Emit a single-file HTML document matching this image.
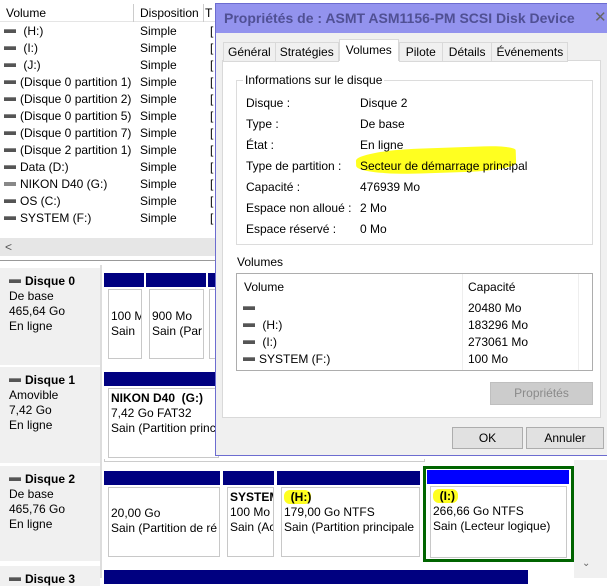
<!DOCTYPE html>
<html><head><meta charset="utf-8"><style>
*{margin:0;padding:0;box-sizing:border-box}
body{width:607px;height:578px;overflow:hidden;background:#fff;font-family:"Liberation Sans",sans-serif;font-size:12px;color:#000;position:relative}
.a{position:absolute;white-space:nowrap}
.ic{display:inline-block;width:12px;height:4px;background:#555;border-top:1px solid #888;vertical-align:middle;margin-right:4px;position:relative;top:-1px}
.bar{position:absolute;height:14px;background:#000080}
.box{position:absolute;background:#fff;border:1px solid #c8c8c8;overflow:hidden;padding:0 2px;font-size:12px;line-height:15px;white-space:nowrap}
.dl{position:absolute;left:0;width:100px;background:#f0f0f0;padding:6px 0 0 9px;line-height:15px;font-size:12px}
.btn{position:absolute;background:#e1e1e1;border:1px solid #adadad;text-align:center;line-height:20px;font-size:12px}
.hl{background:#ffff20;border-radius:6px}
</style></head><body>
<div class="a" style="left:0;top:3px;width:215px;height:19px;background:#fff;border-bottom:1px solid #e5e5e5"></div>
<div class="a" style="left:0;top:4px;width:134px;height:18px;border-right:1px solid #ccc;padding-left:6px;line-height:18px">Volume</div>
<div class="a" style="left:134px;top:4px;width:70px;height:18px;border-right:1px solid #ccc;padding-left:6px;line-height:18px">Disposition</div>
<div class="a" style="left:205px;top:4px;line-height:18px">T</div>
<div class="a" style="left:4px;top:23px;line-height:17px">
<div><span class="ic"></span> (H:)</div><div><span class="ic"></span> (I:)</div><div><span class="ic"></span> (J:)</div>
<div><span class="ic"></span>(Disque 0 partition 1)</div><div><span class="ic"></span>(Disque 0 partition 2)</div><div><span class="ic"></span>(Disque 0 partition 5)</div><div><span class="ic"></span>(Disque 0 partition 7)</div><div><span class="ic"></span>(Disque 2 partition 1)</div><div><span class="ic"></span>Data (D:)</div><div><span class="ic" style="background:#888"></span>NIKON D40 (G:)</div><div><span class="ic"></span>OS (C:)</div><div><span class="ic"></span>SYSTEM (F:)</div></div>
<div class="a" style="left:140px;top:23px;line-height:17px">Simple<br>Simple<br>Simple<br>Simple<br>Simple<br>Simple<br>Simple<br>Simple<br>Simple<br>Simple<br>Simple<br>Simple</div>
<div class="a" style="left:210px;top:23px;line-height:17px">[<br>[<br>[<br>[<br>[<br>[<br>[<br>[<br>[<br>[<br>[<br>[</div>
<div class="a" style="left:0;top:238px;width:215px;height:18px;background:#e6e6e6"></div>
<div class="a" style="left:5px;top:238px;line-height:18px;color:#555">&lt;</div>
<div class="a" style="left:0;top:260px;width:607px;height:318px;background:#fff;border-top:1px solid #999"></div>
<div class="dl" style="top:268px;height:97px"><b><span class="ic"></span>Disque 0</b><br>De base<br>465,64 Go<br>En ligne</div>
<div class="dl" style="top:367px;height:96px"><b><span class="ic"></span>Disque 1</b><br>Amovible<br>7,42 Go<br>En ligne</div>
<div class="dl" style="top:466px;height:95px"><b><span class="ic"></span>Disque 2</b><br>De base<br>465,76 Go<br>En ligne</div>
<div class="dl" style="top:566px;height:20px"><b><span class="ic"></span>Disque 3</b></div>
<div class="a" style="left:100px;top:265px;width:2px;height:313px;background:#ddd"></div>
<div class="bar" style="left:104px;top:273px;width:40px"></div><div class="bar" style="left:146px;top:273px;width:60px"></div><div class="bar" style="left:208px;top:273px;width:10px"></div>
<div class="box" style="left:108px;top:289px;width:34px;height:70px;padding-top:19px">100 M<br>Sain</div>
<div class="box" style="left:149px;top:289px;width:55px;height:70px;padding-top:19px">900 Mo<br>Sain (Par</div>
<div class="box" style="left:209px;top:289px;width:10px;height:70px"></div>
<div class="bar" style="left:104px;top:372px;width:115px"></div>
<div class="box" style="left:108px;top:388px;width:111px;height:70px;padding-top:2px"><b>NIKON D40&nbsp; (G:)</b><br>7,42 Go FAT32<br>Sain (Partition princ</div>
<div class="a" style="left:104px;top:459px;width:321px;height:3px;border:1px solid #ccc;border-top:0"></div>
<div class="bar" style="left:104px;top:471px;width:116px"></div>
<div class="bar" style="left:223px;top:471px;width:51px"></div>
<div class="bar" style="left:277px;top:471px;width:143px"></div>
<div class="box" style="left:108px;top:487px;width:112px;height:70px;padding-top:18px">20,00 Go<br>Sain (Partition de ré</div>
<div class="box" style="left:227px;top:487px;width:47px;height:70px;padding-top:2px"><b>SYSTEM</b><br>100 Mo<br>Sain (Ac</div>
<div class="box" style="left:281px;top:487px;width:139px;height:70px;padding-top:2px"><b><span class="hl">&nbsp; (H:)</span></b><br>179,00 Go NTFS<br>Sain (Partition principale</div>
<div class="a" style="left:423px;top:466px;width:151px;height:96px;border:3px solid #006400"></div>
<div class="bar" style="left:427px;top:470px;width:142px;background:#0000ff"></div>
<div class="box" style="left:430px;top:486px;width:137px;height:72px;padding-top:2px"><b><span class="hl">&nbsp; (I:)&nbsp;</span></b><br>266,66 Go NTFS<br>Sain (Lecteur logique)</div>
<div class="bar" style="left:104px;top:570px;width:424px"></div>
<div class="a" style="left:574px;top:460px;width:33px;height:118px;background:#f0f0f0"></div>
<div class="a" style="left:582px;top:558px;color:#666;font-size:10px">&#8964;</div>
<div class="a" style="left:215px;top:3px;width:400px;height:453px;background:#f0f0f0;border:1px solid #6c6cd0"></div>
<div class="a" style="left:216px;top:4px;width:391px;height:29px;background:#9393ee"></div>
<div class="a" style="left:224px;top:10px;font-size:14px;font-weight:bold;color:#505094">Propriétés de : ASMT ASM1156-PM SCSI Disk Device</div>
<div class="a" style="left:594px;top:8px;font-size:15px;color:#666">✕</div>
<div class="a" style="left:222px;top:60px;width:379px;height:358px;background:#fff;border:1px solid #d9d9d9"></div>
<div class="a" style="left:223px;top:42px;line-height:18px;font-size:12px;display:flex">
<span style="border:1px solid #d9d9d9;padding:0 4px;background:#f0f0f0">Général</span><span style="border:1px solid #d9d9d9;border-left:0;padding:0 4px;background:#f0f0f0">Stratégies</span><span style="border:1px solid #d9d9d9;border-bottom:0;padding:0 6px;background:#fff;margin-top:-3px;height:22px;line-height:20px">Volumes</span><span style="border:1px solid #d9d9d9;padding:0 6px;background:#f0f0f0">Pilote</span><span style="border:1px solid #d9d9d9;border-left:0;padding:0 6px;background:#f0f0f0">Détails</span><span style="border:1px solid #d9d9d9;border-left:0;padding:0 4px;background:#f0f0f0">Événements</span></div>
<div class="a" style="left:236px;top:80px;width:357px;height:165px;border:1px solid #dcdcdc"></div>
<div class="a" style="left:243px;top:73px;background:#fff;padding:0 2px">Informations sur le disque</div>
<div class="a" style="left:246px;top:93px;line-height:21px">Disque :<br>Type :<br>État :<br>Type de partition :<br>Capacité :<br>Espace non alloué :<br>Espace réservé :</div>
<div class="a" style="left:356px;top:148px;width:160px;height:25px;background:#ffff20;border-radius:40% 20% 30% 40%;transform:rotate(-2deg)"></div>
<div class="a" style="left:360px;top:93px;line-height:21px">Disque 2<br>De base<br>En ligne<br>Secteur de démarrage principal<br>476939 Mo<br>2 Mo<br>0 Mo</div>
<div class="a" style="left:237px;top:255px">Volumes</div>
<div class="a" style="left:236px;top:273px;width:357px;height:98px;border:1px solid #adadad"></div>
<div class="a" style="left:462px;top:274px;width:1px;height:96px;background:#eee"></div>
<div class="a" style="left:578px;top:274px;width:1px;height:96px;background:#eee"></div>
<div class="a" style="left:244px;top:280px">Volume</div>
<div class="a" style="left:468px;top:280px">Capacité</div>
<div class="a" style="left:243px;top:300px;line-height:17px"><span class="ic"></span><br><span class="ic"></span> (H:)<br><span class="ic"></span> (I:)<br><span class="ic"></span>SYSTEM (F:)</div>
<div class="a" style="left:468px;top:300px;line-height:17px">20480 Mo<br>183296 Mo<br>273061 Mo<br>100 Mo</div>
<div class="btn" style="left:490px;top:382px;width:103px;height:23px;background:#cccccc;border-color:#bfbfbf;color:#8a8a8a">Propriétés</div>
<div class="btn" style="left:452px;top:427px;width:71px;height:22px">OK</div>
<div class="btn" style="left:526px;top:427px;width:78px;height:22px">Annuler</div>
</body></html>
